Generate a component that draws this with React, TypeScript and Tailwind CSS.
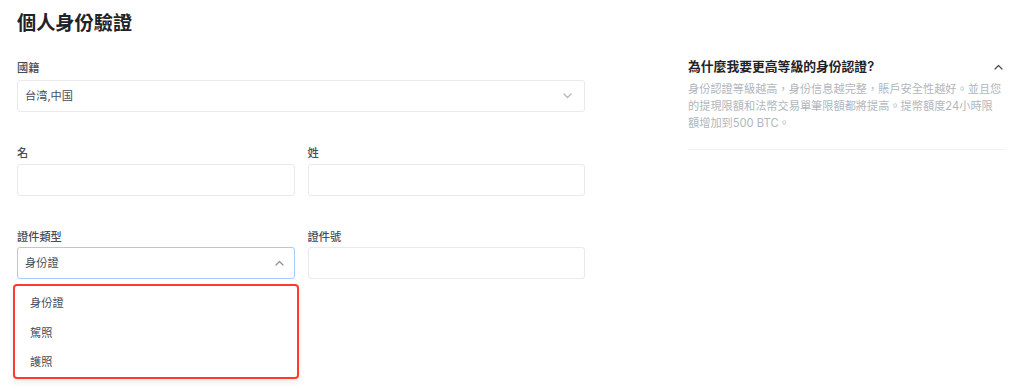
import React from "react";

const font = { fontFamily: '"Inter", "Noto Sans CJK TC", "Noto Sans CJK SC", sans-serif' };

function Chevron({ up = false, className = "" }: { up?: boolean; className?: string }) {
  return (
    <svg width="9" height="6" viewBox="0 0 9 6" className={className} fill="none">
      {up ? (
        <path d="M1 5 L4.5 1.5 L8 5" stroke="currentColor" strokeWidth="1.2" strokeLinecap="round" strokeLinejoin="round" />
      ) : (
        <path d="M1 1 L4.5 4.5 L8 1" stroke="currentColor" strokeWidth="1.2" strokeLinecap="round" strokeLinejoin="round" />
      )}
    </svg>
  );
}

function Label({ children, className = "" }: { children: React.ReactNode; className?: string }) {
  return <div className={"text-[11.2px] leading-[16px] font-medium text-[#474d57] " + className}>{children}</div>;
}

export default function App() {
  return (
    <div className="w-[1024px] h-[389px] bg-white overflow-hidden flex" style={font}>
      <div className="w-[568px] ml-[17px] pt-[9px] flex flex-col">
        <h1 className="text-[19.2px] leading-[28px] font-bold text-[#1e2329]">個人身份驗證</h1>

        <Label className="mt-[23px] mb-[4px]">國籍</Label>
        <div className="h-[32px] rounded-[3px] border border-[#e9eaee] flex items-center justify-between pl-[7px] pr-[12px]">
          <span className="text-[11.2px] text-[#474d57]">台湾,中国</span>
          <Chevron className="text-[#b0b5bd]" />
        </div>

        <div className="mt-[33px] grid grid-cols-2 gap-x-[13px]">
          <div>
            <Label className="mb-[3px]">名</Label>
            <div className="h-[32px] rounded-[3px] border border-[#e9eaee]" />
          </div>
          <div>
            <Label className="mb-[3px]">姓</Label>
            <div className="h-[32px] rounded-[3px] border border-[#e9eaee]" />
          </div>
        </div>

        <div className="mt-[33px] grid grid-cols-2 gap-x-[13px]">
          <div className="relative">
            <Label className="mb-[2px]">證件類型</Label>
            <div className="h-[32px] rounded-[3px] border border-[#a9c8fb] flex items-center justify-between pl-[7px] pr-[10px]">
              <span className="text-[11.2px] text-[#474d57]">身份證</span>
              <Chevron up className="text-[#8a9099]" />
            </div>
            <div className="absolute left-[-4px] top-[55px] w-[286px] h-[95px] rounded-[4px] border-2 border-[#ff3b30] bg-white shadow-[0_3px_6px_rgba(0,0,0,0.08)] flex flex-col pt-[3px]">
              <div className="h-[29.5px] flex items-center pl-[15px] text-[11.2px] text-[#474d57]">身份證</div>
              <div className="h-[29.5px] flex items-center pl-[15px] text-[11.2px] text-[#474d57]">駕照</div>
              <div className="h-[29.5px] flex items-center pl-[15px] text-[11.2px] text-[#474d57]">護照</div>
            </div>
          </div>
          <div>
            <Label className="mb-[2px]">證件號</Label>
            <div className="h-[32px] rounded-[3px] border border-[#e9eaee]" />
          </div>
        </div>
      </div>

      <div className="ml-[103px] w-[317px] pt-[57px]">
        <div className="border-b border-[#eef0f2] pb-[17px]">
          <div className="flex items-center justify-between">
            <span className="text-[12.8px] leading-[20px] font-semibold text-[#1e2329]">為什麼我要更高等級的身份認證?</span>
            <Chevron up className="text-[#474d57] mr-[2px]" />
          </div>
          <p className="mt-[4px] w-[315px] text-[11.2px] leading-[17px] text-[#b1b6be]">
            身份認證等級越高，身份信息越完整，賬戶安全性越好。並且您的提現限額和法幣交易單筆限額都將提高。提幣額度24小時限額增加到500 BTC。
          </p>
        </div>
      </div>
    </div>
  );
}
